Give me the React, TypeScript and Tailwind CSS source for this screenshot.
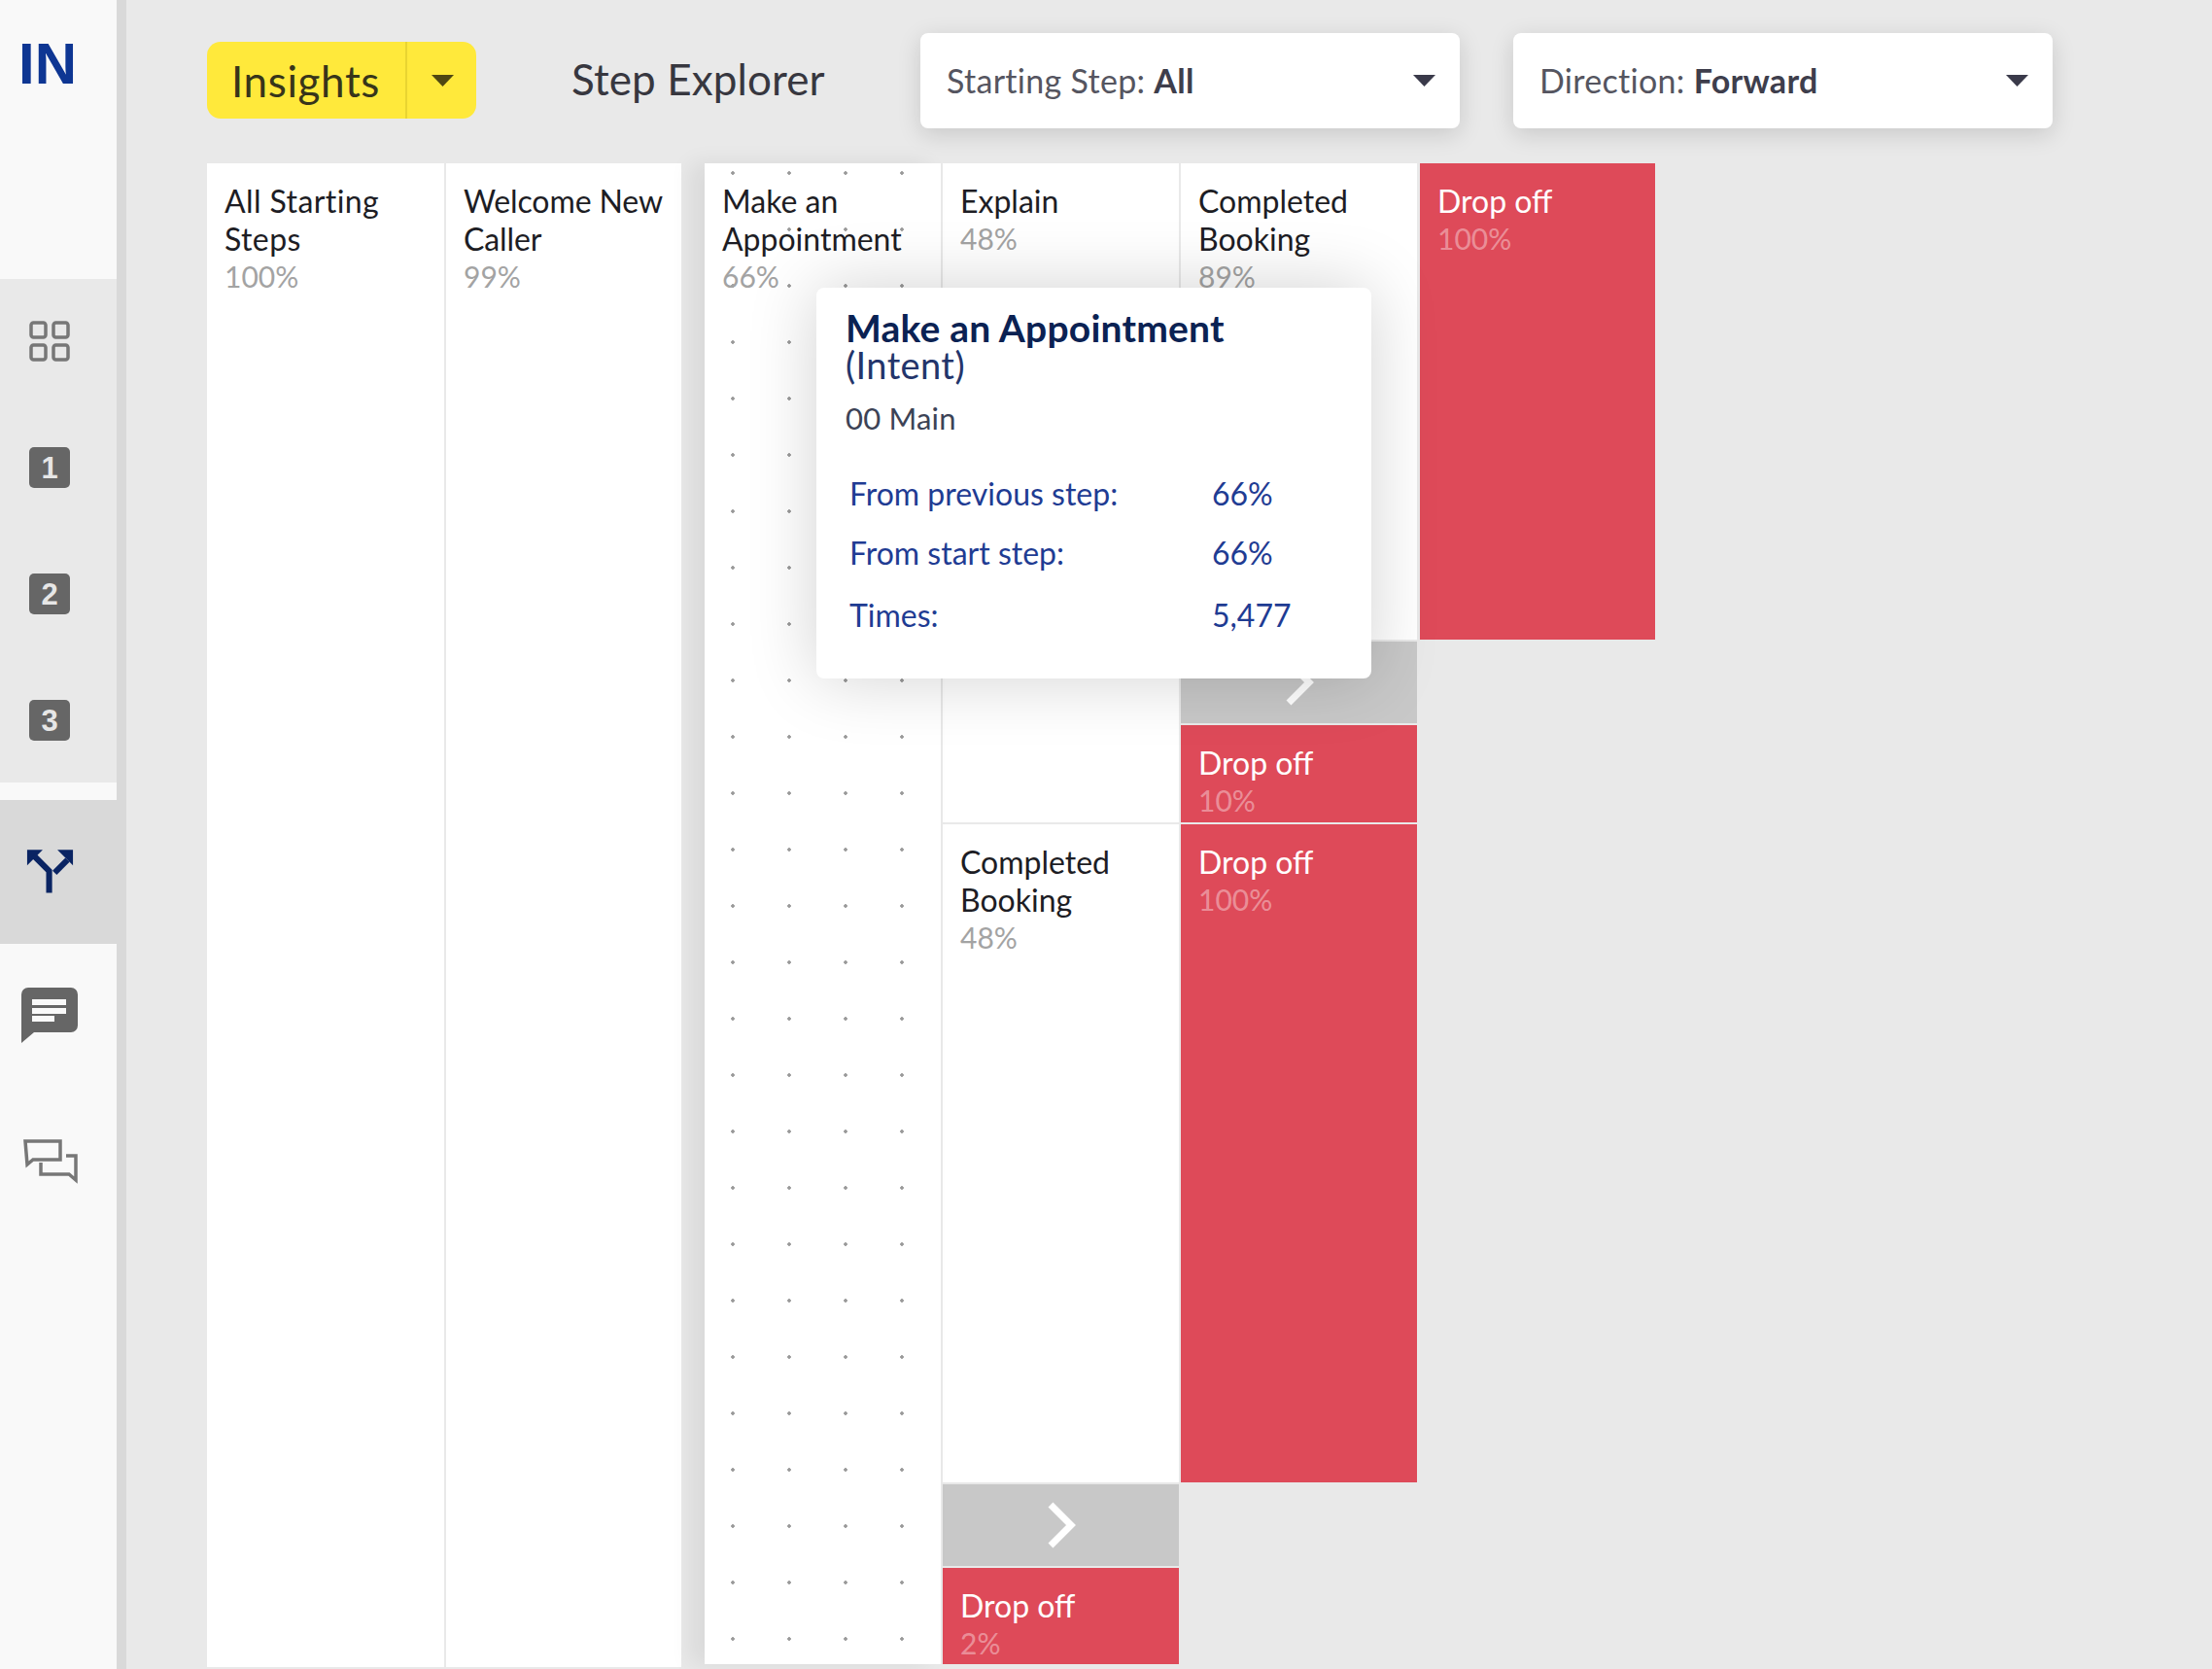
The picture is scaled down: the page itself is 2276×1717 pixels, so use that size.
import { ReactNode } from 'react';

function Caret({ className }: { className: string }) {
  return (
    <svg width="23" height="12" viewBox="0 0 23 12" className={className}>
      <path d="M0 0h23L11.5 12z" fill="currentColor" />
    </svg>
  );
}

function Chevron({ className = 'text-white' }: { className?: string }) {
  return (
    <svg width="30" height="48" viewBox="0 0 30 48" fill="none" className={className}>
      <path d="M4 3l21 21L4 45" stroke="currentColor" strokeWidth="7" />
    </svg>
  );
}

function NumberBadge({ n }: { n: number }) {
  return (
    <div className="flex h-[42px] w-[42px] items-center justify-center rounded-[5px] bg-[#666666] font-['Liberation_Sans',sans-serif] text-[31px] font-bold leading-none text-[#e6e6e6]">
      {n}
    </div>
  );
}

function Sidebar() {
  return (
    <aside className="flex h-full w-[130px] shrink-0 flex-col border-r-[10px] border-[#d9d9d9] bg-[#f9f9f9]">
      <div className="h-[287px] pl-[19px] pt-[26px] font-['Liberation_Sans',sans-serif] text-[60px] font-bold leading-[80px] text-[#0e3693]">
        IN
      </div>

      <div className="flex h-[518px] flex-col items-center bg-[#e9e9e9] pr-[18px]">
        <svg width="42" height="42" viewBox="0 0 42 42" fill="none" stroke="#777777" strokeWidth="3.5" className="mt-[43px]">
          <rect x="2" y="2" width="15" height="15" rx="2.5" />
          <rect x="25" y="2" width="15" height="15" rx="2.5" />
          <rect x="2" y="25" width="15" height="15" rx="2.5" />
          <rect x="25" y="25" width="15" height="15" rx="2.5" />
        </svg>
        <div className="mt-[88px] flex flex-col gap-[88px]">
          <NumberBadge n={1} />
          <NumberBadge n={2} />
          <NumberBadge n={3} />
        </div>
      </div>

      <div className="mt-[18px] flex h-[148px] items-center justify-center bg-[#d9d9d9] pr-[18px]">
        <svg width="49" height="48" viewBox="0 0 52 50" fill="none" className="mt-[-2px]">
          <path d="M1 2h17L1 19z" fill="#0a2463" />
          <path d="M8 8l17 17v24" stroke="#0a2463" strokeWidth="6.5" />
          <path d="M51 2H34l17 17z" fill="#0a2463" />
          <path d="M31 27l14-14" stroke="#0a2463" strokeWidth="6.5" />
        </svg>
      </div>

      <div className="flex flex-col items-center pr-[18px]">
        <svg width="58" height="58" viewBox="0 0 58 58" className="mt-[45px]">
          <path d="M7 0h44a7 7 0 0 1 7 7v32a7 7 0 0 1-7 7H13L0 57V7a7 7 0 0 1 7-7z" fill="#666666" />
          <path d="M11 12h35v6H11zM11 21h35v6H11zM11 29h23v6H11z" fill="#f9f9f9" />
        </svg>
        <svg width="56" height="46" viewBox="0 0 56 46" fill="none" stroke="#777777" strokeWidth="3.5" className="ml-[2px] mt-[98px]">
          <path d="M2 2h36v19H10l-6 5z" />
          <path d="M44 17h10v25l-7-6H18v-12" />
        </svg>
      </div>
    </aside>
  );
}

function Dropdown({ label, value }: { label: string; value: string }) {
  return (
    <div className="flex h-[98px] w-[555px] items-center justify-between rounded-[8px] bg-white pl-[27px] pr-[25px] text-[34px] tracking-[0.3px] text-[#555560] shadow-[0_6px_24px_rgba(0,0,0,0.14)]">
      <span className="mb-[2px]">
        {label}: <span className="font-bold text-[#3e3e4c]">{value}</span>
      </span>
      <Caret className="text-[#3a3a4a]" />
    </div>
  );
}

function Header() {
  return (
    <header className="flex h-[168px] shrink-0 items-start pl-[83px] pt-[34px]">
      <div className="mt-[9px] flex h-[79px] w-[277px] items-center rounded-[14px] bg-[#ffe93b] text-[#37351a]">
        <div className="flex h-full w-[206px] items-center border-r-2 border-[#e9d431] pl-[25px] text-[44px] tracking-[0.6px]">Insights</div>
        <Caret className="ml-[25px] text-[#4f4712]" />
      </div>
      <div className="ml-[98px] mt-[7px] h-[80px] w-[262px] whitespace-nowrap text-[44px] leading-[80px] tracking-[0.1px] text-[#37373f]">Step Explorer</div>
      <div className="ml-[97px] flex gap-[55px]">
        <Dropdown label="Starting Step" value="All" />
        <Dropdown label="Direction" value="Forward" />
      </div>
    </header>
  );
}

function Cell({ title, pct, className = '' }: { title: ReactNode; pct: string; className?: string }) {
  return (
    <div className={`whitespace-nowrap bg-white px-[18px] pt-[19px] text-[32px] leading-[39px] text-[#1d1d24] ${className}`}>
      {title}
      <div className="text-[30px] text-[#a3a3a3]">{pct}</div>
    </div>
  );
}

function DropCell({ pct, className = '' }: { pct: string; className?: string }) {
  return (
    <div className={`bg-[#de4a59] px-[18px] pt-[19px] text-[32px] leading-[39px] text-white ${className}`}>
      Drop off
      <div className="text-[30px] text-white/40">{pct}</div>
    </div>
  );
}

function NextCell({ className = '' }: { className?: string }) {
  return (
    <div className={`flex items-center justify-center bg-[#c8c8c8] ${className}`}>
      <Chevron />
    </div>
  );
}

function Tooltip() {
  const rows = [
    { label: 'From previous step:', value: '66%', height: 'h-[61px]' },
    { label: 'From start step:', value: '66%', height: 'h-[62px]' },
    { label: 'Times:', value: '5,477', height: 'h-[66px]' },
  ];

  return (
    <div className="absolute left-[840px] top-[296px] h-[402px] w-[571px] rounded-[8px] bg-white pl-[30px] pt-[22px] shadow-[0_0_70px_rgba(0,0,0,0.18)]">
      <div className="whitespace-nowrap text-[39px] font-bold leading-[38px] tracking-[0.2px] text-[#0b2253]">Make an Appointment</div>
      <div className="text-[38px] leading-[38px] tracking-[0.4px] text-[#23356b]">(Intent)</div>
      <div className="mt-[17px] text-[31px] leading-[38px] tracking-[0.2px] text-[#3c4356]">00 Main</div>
      <div className="ml-[4px] mt-[28px] text-[32px] text-[#1f3c93]">
        {rows.map((row) => (
          <div key={row.label} className={`grid grid-cols-[373px_1fr] items-center ${row.height}`}>
            <span>{row.label}</span>
            <span>{row.value}</span>
          </div>
        ))}
      </div>
    </div>
  );
}

export default function App() {
  return (
    <div className="relative flex h-[1717px] w-[2276px] overflow-hidden bg-[#e9e9e9] font-['Lato',sans-serif]">
      <Sidebar />
      <main className="flex min-w-0 flex-1 flex-col">
        <Header />
        <div className="flex flex-1 pl-[83px]">
          <Cell title={<span className="tracking-[0.4px]">All Starting<br />Steps</span>} pct="100%" className="mb-[2px] w-[244px]" />
          <Cell title={<span className="tracking-[-0.1px]">Welcome New<br />Caller</span>} pct="99%" className="mb-[2px] ml-[2px] w-[242px]" />

          <Cell
            title={<>Make an<br />Appointment</>}
            pct="66%"
            className="relative ml-[24px] mb-[5px] w-[243px] bg-[radial-gradient(circle,#999999_1.5px,transparent_2px)] bg-[length:58px_58px] bg-[position:0_-19px] shadow-[-14px_0_22px_rgba(0,0,0,0.07)]"
          />

          <div className="ml-[2px] mb-[5px] flex w-[243px] flex-col gap-[2px]">
            <Cell title="Explain" pct="48%" className="h-[678px]" />
            <Cell title={<>Completed<br />Booking</>} pct="48%" className="h-[677px]" />
            <NextCell className="h-[84px]" />
            <DropCell pct="2%" className="h-[99px]" />
          </div>

          <div className="ml-[2px] flex w-[243px] flex-col gap-[2px]">
            <Cell title={<>Completed<br />Booking</>} pct="89%" className="h-[490px]" />
            <NextCell className="h-[84px]" />
            <DropCell pct="10%" className="h-[100px]" />
            <DropCell pct="100%" className="h-[677px]" />
          </div>

          <div className="ml-[3px] w-[242px]">
            <DropCell pct="100%" className="h-[490px]" />
          </div>
        </div>
      </main>
      <Tooltip />
    </div>
  );
}
